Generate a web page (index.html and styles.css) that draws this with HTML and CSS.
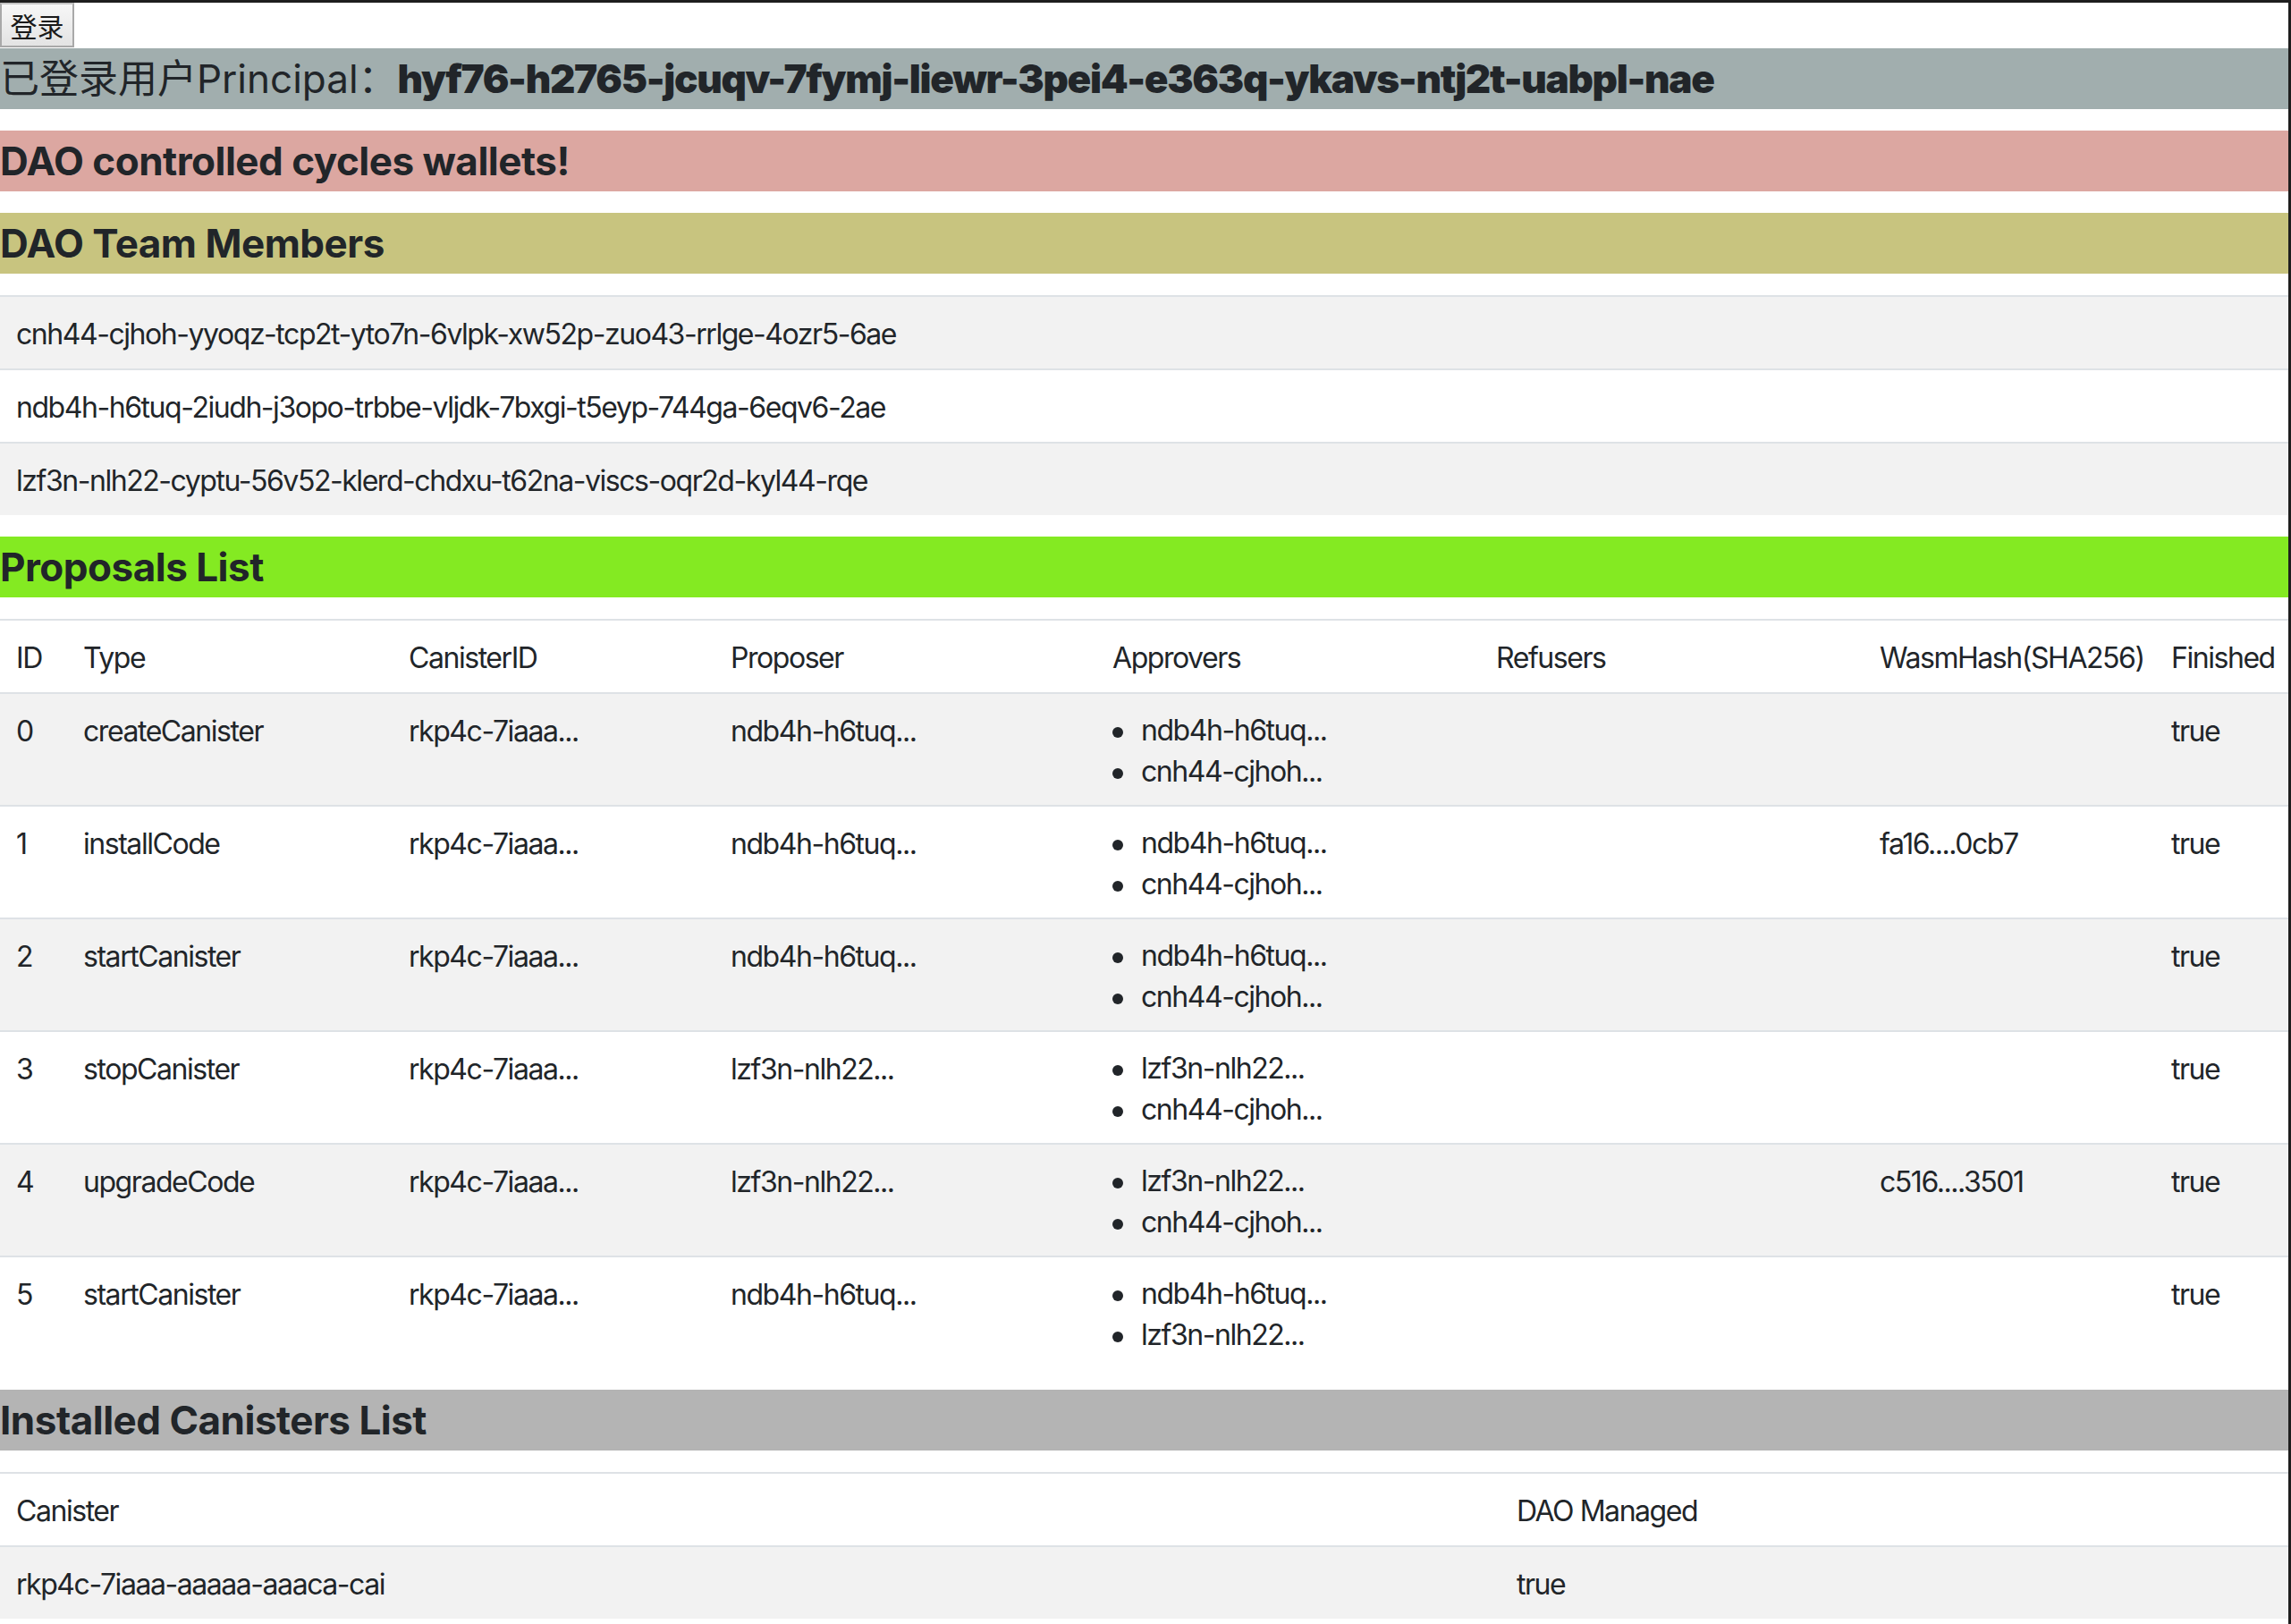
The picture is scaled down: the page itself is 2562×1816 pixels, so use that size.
FILE: index.html
```html
<!DOCTYPE html>
<html lang="zh">
<head>
<meta charset="utf-8">
<title>DAO</title>
<link rel="stylesheet" href="styles.css">
</head>
<body>
<div class="page">
  <div class="login-row"><button class="btn-login">登录</button></div>
  <h5 class="bar bar-principal"><span class="lbl">已登录用户Principal：</span><b class="pid">hyf76-h2765-jcuqv-7fymj-liewr-3pei4-e363q-ykavs-ntj2t-uabpl-nae</b></h5>
  <h5 class="bar bar-dao">DAO controlled cycles wallets!</h5>
  <h5 class="bar bar-team">DAO Team Members</h5>
  <table class="tbl">
    <tbody>
      <tr class="odd"><td>cnh44-cjhoh-yyoqz-tcp2t-yto7n-6vlpk-xw52p-zuo43-rrlge-4ozr5-6ae</td></tr>
      <tr><td>ndb4h-h6tuq-2iudh-j3opo-trbbe-vljdk-7bxgi-t5eyp-744ga-6eqv6-2ae</td></tr>
      <tr class="odd"><td>lzf3n-nlh22-cyptu-56v52-klerd-chdxu-t62na-viscs-oqr2d-kyl44-rqe</td></tr>
    </tbody>
  </table>
  <h5 class="bar bar-proposals">Proposals List</h5>
  <table class="tbl tbl-proposals">
    <colgroup>
      <col class="c-id"><col class="c-type"><col class="c-can"><col class="c-prop"><col class="c-appr"><col class="c-ref"><col class="c-hash"><col class="c-fin">
    </colgroup>
    <thead>
      <tr><th>ID</th><th>Type</th><th>CanisterID</th><th>Proposer</th><th>Approvers</th><th>Refusers</th><th>WasmHash(SHA256)</th><th>Finished</th></tr>
    </thead>
    <tbody>
      <tr class="odd"><td>0</td><td>createCanister</td><td>rkp4c-7iaaa...</td><td>ndb4h-h6tuq...</td><td><ul class="plist"><li>ndb4h-h6tuq...</li><li>cnh44-cjhoh...</li></ul></td><td></td><td></td><td>true</td></tr>
      <tr><td>1</td><td>installCode</td><td>rkp4c-7iaaa...</td><td>ndb4h-h6tuq...</td><td><ul class="plist"><li>ndb4h-h6tuq...</li><li>cnh44-cjhoh...</li></ul></td><td></td><td>fa16....0cb7</td><td>true</td></tr>
      <tr class="odd"><td>2</td><td>startCanister</td><td>rkp4c-7iaaa...</td><td>ndb4h-h6tuq...</td><td><ul class="plist"><li>ndb4h-h6tuq...</li><li>cnh44-cjhoh...</li></ul></td><td></td><td></td><td>true</td></tr>
      <tr><td>3</td><td>stopCanister</td><td>rkp4c-7iaaa...</td><td>lzf3n-nlh22...</td><td><ul class="plist"><li>lzf3n-nlh22...</li><li>cnh44-cjhoh...</li></ul></td><td></td><td></td><td>true</td></tr>
      <tr class="odd"><td>4</td><td>upgradeCode</td><td>rkp4c-7iaaa...</td><td>lzf3n-nlh22...</td><td><ul class="plist"><li>lzf3n-nlh22...</li><li>cnh44-cjhoh...</li></ul></td><td></td><td>c516....3501</td><td>true</td></tr>
      <tr><td>5</td><td>startCanister</td><td>rkp4c-7iaaa...</td><td>ndb4h-h6tuq...</td><td><ul class="plist"><li>ndb4h-h6tuq...</li><li>lzf3n-nlh22...</li></ul></td><td></td><td></td><td>true</td></tr>
    </tbody>
  </table>
  <h5 class="bar bar-installed">Installed Canisters List</h5>
  <table class="tbl tbl-installed">
    <colgroup><col class="c-canister"><col class="c-managed"></colgroup>
    <thead>
      <tr><th>Canister</th><th>DAO Managed</th></tr>
    </thead>
    <tbody>
      <tr class="odd"><td>rkp4c-7iaaa-aaaaa-aaaca-cai</td><td>true</td></tr>
    </tbody>
  </table>
</div>
</body>
</html>
```

FILE: styles.css
```css
html, body {
  margin: 0;
  padding: 0;
  background: #ffffff;
}

body {
  font-family: Inter, "Noto Sans CJK SC", sans-serif;
  font-size: 32px;
  line-height: 1.5;
  color: #212529;
}

.page {
  box-sizing: border-box;
  min-height: 100vh;
  border-top: 3px solid #1e1e1e;
  border-right: 3px solid #1e1e1e;
  display: flex;
  flex-direction: column;
}

.login-row {
  height: 51px;
  display: flex;
  align-items: flex-start;
}

.btn-login {
  box-sizing: border-box;
  height: 50px;
  width: 83px;
  margin: 0;
  padding: 0 8px;
  font-family: "Noto Sans CJK SC", sans-serif;
  font-size: 30px;
  line-height: 1;
  color: #1a1a1a;
  background: linear-gradient(#f7f7f7, #e3e3e3);
  border: 2px solid #a9a9a9;
  border-top-color: #c4c4c4;
  border-radius: 0;
}

.bar {
  margin: 0 0 24px 0;
  padding: 8px 0;
  font-size: 44px;
  line-height: 52px;
  font-weight: 700;
  letter-spacing: -0.5px;
  white-space: nowrap;
  overflow: hidden;
}

.bar-principal { background: #a1aeae; }
.bar-principal .lbl { font-weight: 400; letter-spacing: 0; }
.bar-principal .pid { letter-spacing: -1.3px; }
.bar-dao { background: #dca7a1; }
.bar-team { background: #c8c47f; }
.bar-proposals { background: #84ea22; }
.bar-installed { background: #b4b4b4; }

.tbl {
  width: 100%;
  border-collapse: collapse;
  table-layout: fixed;
  margin: 0 0 24px 0;
  letter-spacing: -1.45px;
}

.tbl th,
.tbl td {
  padding: 18px 14px 14px 18px;
  text-align: left;
  vertical-align: top;
  font-weight: 400;
  white-space: nowrap;
}

.tbl tr {
  border-top: 2px solid #dee2e6;
}

.tbl tr.odd {
  background: #f2f2f2;
}

.tbl-installed {
  margin-bottom: 0;
}

.c-id { width: 75px; }
.c-type { width: 364px; }
.c-can { width: 360px; }
.c-prop { width: 427px; }
.c-appr { width: 429px; }
.c-ref { width: 429px; }
.c-hash { width: 326px; }
.c-fin { width: auto; }

.c-canister { width: 1678px; }
.c-managed { width: auto; }

.plist {
  list-style: none;
  margin: 0;
  padding: 0;
}

.plist li {
  line-height: 46px;
}

.plist li::before {
  content: "";
  display: inline-block;
  width: 12px;
  height: 12px;
  border-radius: 50%;
  background: #212529;
  margin-right: 20px;
  vertical-align: 3px;
}
```
